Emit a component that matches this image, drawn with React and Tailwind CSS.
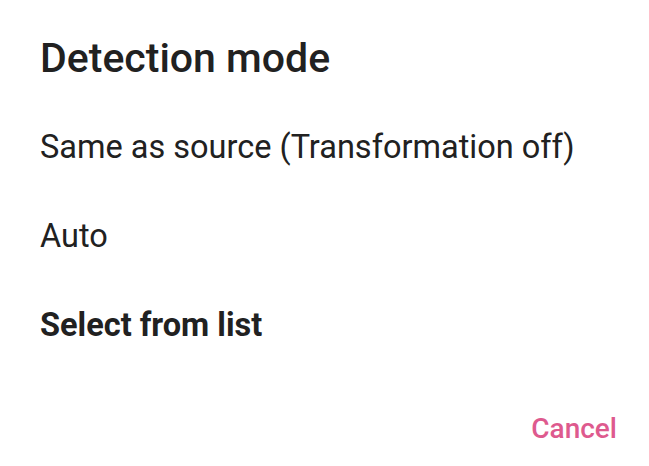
export default function App() {
  const options = [
    { label: 'Same as source (Transformation off)', selected: false },
    { label: 'Auto', selected: false },
    { label: 'Select from list', selected: true },
  ];

  return (
    <div className="w-[649px] h-[466px] bg-white font-['Roboto',sans-serif] text-[#212121] flex flex-col">
      <h1 className="pl-[40px] pt-[36px] text-[41px] leading-[44px] font-medium">Detection mode</h1>
      <ul className="mt-[45px] flex flex-col">
        {options.map((o) => (
          <li
            key={o.label}
            className={`pl-[40px] h-[89px] text-[32.5px] leading-[44px] ${o.selected ? 'font-bold' : 'font-normal'}`}
          >
            {o.label}
          </li>
        ))}
      </ul>
      <div className="flex justify-end pr-[32px] mt-[16px]">
        <button className="text-[28px] font-medium text-[#de5a8e]">Cancel</button>
      </div>
    </div>
  );
}
